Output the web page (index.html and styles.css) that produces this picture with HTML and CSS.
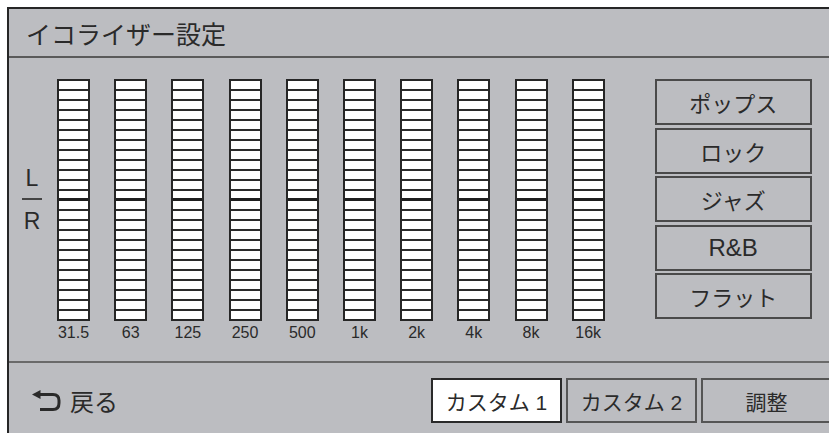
FILE: index.html
```html
<!DOCTYPE html>
<html lang="ja">
  <head>
    <meta charset="UTF-8" />
    <meta name="viewport" content="width=device-width, initial-scale=1.0" />
    <title>イコライザー設定</title>
    <link rel="stylesheet" href="styles.css">
  </head>
  <body>
    <div class="screen">
      <header class="title-bar">イコライザー設定</header>

      <main class="eq">
        <div class="channel">
          <span>L</span>
          <div class="channel-line"></div>
          <span class="channel-r">R</span>
        </div>

        <div class="bands">
          <div class="band"><div class="bar"></div><div class="freq">31.5</div></div>
          <div class="band"><div class="bar"></div><div class="freq">63</div></div>
          <div class="band"><div class="bar"></div><div class="freq">125</div></div>
          <div class="band"><div class="bar"></div><div class="freq">250</div></div>
          <div class="band"><div class="bar"></div><div class="freq">500</div></div>
          <div class="band"><div class="bar"></div><div class="freq">1k</div></div>
          <div class="band"><div class="bar"></div><div class="freq">2k</div></div>
          <div class="band"><div class="bar"></div><div class="freq">4k</div></div>
          <div class="band"><div class="bar"></div><div class="freq">8k</div></div>
          <div class="band"><div class="bar"></div><div class="freq">16k</div></div>
        </div>

        <div class="presets">
          <div class="preset">ポップス</div>
          <div class="preset">ロック</div>
          <div class="preset">ジャズ</div>
          <div class="preset latin">R&amp;B</div>
          <div class="preset">フラット</div>
        </div>
      </main>

      <footer class="bottom-bar">
        <div class="back">
          <svg class="back-icon" width="29" height="22" viewBox="0 0 29 22">
            <polygon points="0,4.5 8.5,0 8.5,9" fill="#2a2a2a" />
            <path d="M7 4.5 H21 Q27 4.5 27 10.5 V13 Q27 19.5 21 19.5 H8" fill="none" stroke="#2a2a2a" stroke-width="3" />
          </svg>
          <span>戻る</span>
        </div>
        <div class="tabs">
          <div class="tab active">カスタム 1</div>
          <div class="tab">カスタム 2</div>
          <div class="tab">調整</div>
        </div>
      </footer>
    </div>
  </body>
</html>
```

FILE: styles.css
```css
* {
  box-sizing: border-box;
}

body {
  margin: 0;
  padding: 0;
  background-color: #fff;
  font-family: "Liberation Sans", "Noto Sans CJK JP", sans-serif;
  color: #2a2a2a;
  overflow: hidden;
  height: 433px;
}

.screen {
  margin: 7px 0 0 7px;
  width: 840px;
  height: 440px;
  background-color: #bcbdc1;
  border-top: 2px solid #262626;
  border-left: 2px solid #262626;
}

.title-bar {
  height: 49px;
  display: flex;
  align-items: center;
  padding-left: 17px;
  font-size: 25px;
  border-bottom: 2px solid #5a5a5a;
}

.eq {
  height: 305px;
  display: flex;
  align-items: flex-start;
  padding-top: 21px;
  border-bottom: 2px solid #6a6a6a;
}

/* L / R */
.channel {
  width: 20px;
  margin-left: 13px;
  padding-top: 88px;
  display: flex;
  flex-direction: column;
  align-items: center;
  font-size: 23px;
  line-height: 23px;
}
.channel-line {
  width: 20px;
  height: 2px;
  margin-top: 8px;
  background-color: #444;
}
.channel-r {
  margin-top: 10px;
}

.bands {
  margin-left: 15px;
  display: grid;
  grid-template-columns: repeat(10, 33px);
  column-gap: 24.2px;
}
.band {
  display: flex;
  flex-direction: column;
  align-items: center;
}
.bar {
  position: relative;
  width: 33px;
  height: 242px;
  border: 2px solid #262626;
  background: repeating-linear-gradient(to bottom, #fff 0 8px, #2a2a2a 8px 10px);
}
.bar::after {
  content: "";
  position: absolute;
  left: 0;
  right: 0;
  top: 117px;
  height: 3px;
  background-color: #1e1e1e;
}
.freq {
  margin-top: 3px;
  font-size: 16px;
  line-height: 18px;
  white-space: nowrap;
}

.presets {
  margin-left: 50px;
  width: 157px;
  display: flex;
  flex-direction: column;
  gap: 2.5px;
}
.preset {
  height: 46px;
  display: flex;
  justify-content: center;
  align-items: center;
  border: 2px solid #4a4a4a;
  font-size: 22px;
}
.preset.latin {
  font-size: 24px;
}

.bottom-bar {
  display: flex;
  align-items: flex-start;
  padding: 15px 15px 0 23px;
}
.back {
  height: 45px;
  display: flex;
  align-items: center;
  gap: 9px;
  font-size: 24px;
}
.back-icon {
  display: block;
}
.tabs {
  margin-left: auto;
  display: flex;
  gap: 4px;
}
.tab {
  width: 131px;
  height: 45px;
  display: flex;
  justify-content: center;
  align-items: center;
  border: 2px solid #555;
  font-size: 21px;
}
.tab.active {
  background-color: #fff;
  border-color: #2a2a2a;
}
```
